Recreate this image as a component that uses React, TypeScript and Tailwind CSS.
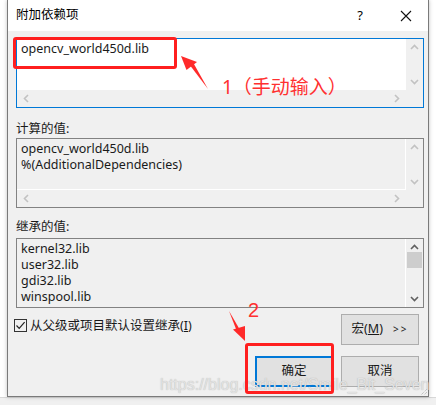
import React from 'react';

const font = { fontFamily: '"Noto Sans", "Noto Sans CJK SC", sans-serif' };

function ChevronUp({ dark }: { dark?: boolean }) {
  return (
    <svg width="9" height="6" viewBox="0 0 9 6">
      <path d="M1 5 L4.5 1.5 L8 5" fill="none" stroke={dark ? '#606060' : '#c2c2c2'} strokeWidth="1.6" />
    </svg>
  );
}

function ChevronDown({ dark }: { dark?: boolean }) {
  return (
    <svg width="9" height="6" viewBox="0 0 9 6">
      <path d="M1 1 L4.5 4.5 L8 1" fill="none" stroke={dark ? '#606060' : '#c2c2c2'} strokeWidth="1.6" />
    </svg>
  );
}

function ChevronSide({ right }: { right?: boolean }) {
  return (
    <svg width="6" height="9" viewBox="0 0 6 9">
      <path d={right ? 'M1 1 L4.5 4.5 L1 8' : 'M5 1 L1.5 4.5 L5 8'} fill="none" stroke="#c2c2c2" strokeWidth="1.6" />
    </svg>
  );
}

// multi-line edit box with scroll bars, like the Win32 one
function EditBox({
  lines,
  focused,
  disabled,
  hscroll,
  thumb,
}: {
  lines: string[];
  focused?: boolean;
  disabled?: boolean;
  hscroll?: boolean;
  thumb?: boolean;
}) {
  return (
    <div
      className={`ml-[4px] w-[408px] h-[70px] border flex flex-col ${focused ? 'border-[#0078d7]' : 'border-[#828282]'}`}
    >
      <div className="flex flex-1 min-h-0">
        <div
          className={`flex-1 overflow-hidden pl-[4px] pt-[2px] text-[12.5px] leading-[16px] text-[#1a1a1a] ${disabled ? 'bg-[#f0f0f0] border-r border-b border-white' : 'bg-white'} ${!hscroll && disabled ? 'border-b-0' : ''}`}
        >
          {lines.map((l) => (
            <div key={l}>{l}</div>
          ))}
        </div>
        <div className="w-[17px] bg-[#f0f0f0] flex flex-col items-center justify-between py-[5px]">
          <ChevronUp dark={thumb} />
          {thumb && <div className="w-[15px] h-[16px] bg-[#cdcdcd] mt-[2px] mb-auto" />}
          <ChevronDown dark={thumb} />
        </div>
      </div>
      {hscroll && (
        <div className="h-[17px] flex bg-[#f0f0f0]">
          <div className="flex-1 flex items-center justify-between px-[6px]">
            <ChevronSide />
            <ChevronSide right />
          </div>
          <div className="w-[17px]" />
        </div>
      )}
    </div>
  );
}

function Button({ children, primary }: { children: React.ReactNode; primary?: boolean }) {
  return (
    <div
      className={`w-[78px] h-[31px] flex items-center justify-center bg-[#e1e1e1] text-[12.5px] text-[#1a1a1a] ${primary ? 'border-2 border-[#0078d7]' : 'border border-[#adadad]'}`}
    >
      {children}
    </div>
  );
}

export default function App() {
  return (
    <div className="relative w-[436px] h-[405px] bg-white overflow-hidden" style={font}>
      {/* background window behind the dialog */}
      <div className="absolute left-0 top-[397px] w-[436px] h-[8px] bg-[#f0f0f0] border-t border-[#d8d8d8]" />

      <div className="relative ml-[7px] w-[422px] h-[397px] border border-t-0 border-[#7a7a7a] bg-[#f0f0f0] flex flex-col shadow-[0_0_4px_rgba(0,0,0,0.25)]">
        {/* title bar */}
        <div className="h-[31px] bg-white flex items-center pl-[8px] pr-[16px] text-[12.5px] text-black">
          <span className="flex-1">附加依赖项</span>
          <span className="w-[12px] text-center mr-[34px] text-[13px]">?</span>
          <svg width="12" height="12" viewBox="0 0 12 12">
            <path d="M1 1 L11 11 M11 1 L1 11" stroke="#111" strokeWidth="1.1" />
          </svg>
        </div>

        {/* body */}
        <div className="flex flex-col pl-[4px] pt-[7px]">
          <EditBox lines={['opencv_world450d.lib']} focused hscroll />

          <div className="mt-[11px] ml-[4px] h-[19px] text-[12.5px] text-[#1a1a1a] leading-[19px]">计算的值:</div>
          <EditBox lines={['opencv_world450d.lib', '%(AdditionalDependencies)']} disabled hscroll />

          <div className="mt-[10px] ml-[4px] h-[20px] text-[12.5px] text-[#1a1a1a] leading-[18px]">继承的值:</div>
          <EditBox lines={['kernel32.lib', 'user32.lib', 'gdi32.lib', 'winspool.lib']} disabled thumb />

          <div className="flex mt-[6px]">
            <div className="flex-1 flex items-start pt-[5px] pl-[2px]">
              <div className="w-[13px] h-[13px] border border-[#333] bg-[#f0f0f0] flex items-center justify-center">
                <svg width="11" height="11" viewBox="0 0 11 11">
                  <path d="M1.5 5.5 L4.2 8.3 L9.6 2.2" fill="none" stroke="#222" strokeWidth="1.2" />
                </svg>
              </div>
              <span className="ml-[3px] text-[12.5px] leading-[13px] text-[#1a1a1a]">
                从父级或项目默认设置继承(<span className="underline">I</span>)
              </span>
            </div>
            <div className="mr-[9px] flex flex-col gap-[11px]">
              <Button>
                宏(<span className="underline">M</span>)<span className="ml-[10px] text-[10px] tracking-[2px]">&gt;&gt;</span>
              </Button>
              <div className="flex gap-[8px] -ml-[86px]">
                <Button primary>确定</Button>
                <Button>取消</Button>
              </div>
            </div>
          </div>
        </div>

        {/* resize grip */}
        <svg className="absolute right-0 bottom-0" width="9" height="9" viewBox="0 0 9 9">
          <path d="M8 2 L2 8 M8 5 L5 8" stroke="#b0b0b0" strokeWidth="1" strokeDasharray="1 1" />
        </svg>
      </div>

      {/* watermark */}
      <div
        className="absolute left-[160px] top-[374px] text-[16px] leading-[22px] text-[#e2e2e2] whitespace-nowrap"
        style={{ fontFamily: '"Liberation Sans", sans-serif', textShadow: '0 0 1px rgba(120,120,120,0.5)' }}
      >
        https://blog.csdn.net/Smile_Bit_Seven
      </div>

      {/* annotations */}
      <div className="absolute left-[13px] top-[37px] w-[164px] h-[32px] border-[3px] border-[#ff1f1f] rounded-[3px]" />
      <div className="absolute left-[245px] top-[343px] w-[89px] h-[51px] border-[3px] border-[#ff1f1f] rounded-[3px]" />
      <div className="absolute left-[222px] top-[75px] text-[19px] leading-[24px] text-[#ff3030] whitespace-nowrap" style={font}>
        1（手动输入）
      </div>
      <div
        className="absolute left-[248px] top-[299px] text-[20px] leading-[22px] text-[#ff3030]"
        style={{ fontFamily: '"Liberation Sans", sans-serif' }}
      >
        2
      </div>
      <svg className="absolute left-0 top-0 pointer-events-none" width="436" height="405" viewBox="0 0 436 405">
        <path d="M208 89 L189 64 L192.5 61.5 Z" fill="#ff2a2a" />
        <path d="M181 56 L197 62 L186.5 70 Z" fill="#ff2a2a" />
        <path d="M229 311 L240 330 L237 331.5 Z" fill="#ff2a2a" />
        <path d="M245 341 L233 329.5 L245 326 Z" fill="#ff2a2a" />
      </svg>
    </div>
  );
}
